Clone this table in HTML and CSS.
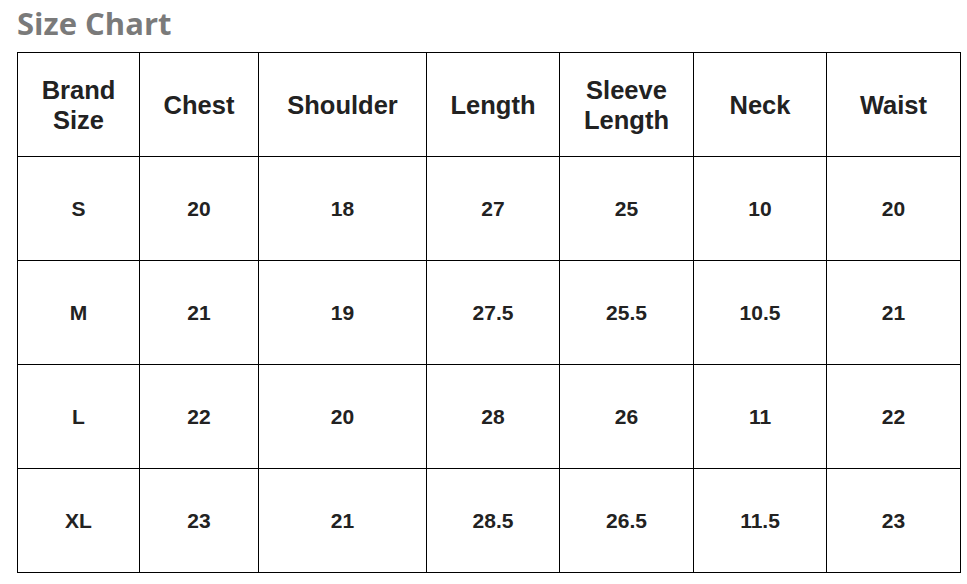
FILE: index.html
```html
<!DOCTYPE html>
<html>
<head>
<meta charset="utf-8">
<link rel="stylesheet" href="styles.css">
</head>
<body>
<h1 class="title">Size Chart</h1>
<table class="chart">
  <colgroup>
    <col class="c1"><col class="c2"><col class="c3"><col class="c4"><col class="c5"><col class="c6"><col class="c7">
  </colgroup>
  <thead>
    <tr><th>Brand<br>Size</th><th>Chest</th><th>Shoulder</th><th>Length</th><th>Sleeve<br>Length</th><th>Neck</th><th>Waist</th></tr>
  </thead>
  <tbody>
    <tr><td>S</td><td>20</td><td>18</td><td>27</td><td>25</td><td>10</td><td>20</td></tr>
    <tr><td>M</td><td>21</td><td>19</td><td>27.5</td><td>25.5</td><td>10.5</td><td>21</td></tr>
    <tr><td>L</td><td>22</td><td>20</td><td>28</td><td>26</td><td>11</td><td>22</td></tr>
    <tr><td>XL</td><td>23</td><td>21</td><td>28.5</td><td>26.5</td><td>11.5</td><td>23</td></tr>
  </tbody>
</table>
</body>
</html>
```
FILE: styles.css
```css
html, body {
  margin: 0;
  padding: 0;
  background: #fff;
}
body {
  padding: 2px 0 0 17px;
}
.title {
  margin: 0;
  font-family: "Open Sans", sans-serif;
  font-weight: 700;
  font-size: 31px;
  line-height: 42px;
  color: #7a7a7a;
}
.chart {
  margin-top: 8px;
  border-collapse: collapse;
  table-layout: fixed;
  width: 943px;
  font-family: "Liberation Sans", Arial, sans-serif;
  color: #222;
  text-align: center;
}
.chart th, .chart td {
  border: 1px solid #000;
  padding: 0;
  height: 103px;
}
.chart th {
  font-size: 25.5px;
  line-height: 30px;
  font-weight: 700;
}
.chart td {
  font-size: 21px;
  font-weight: 700;
}
.c1 { width: 122px; }
.c2 { width: 119px; }
.c3 { width: 168px; }
.c4 { width: 133px; }
.c5 { width: 134px; }
.c6 { width: 133px; }
.c7 { width: 134px; }
```
